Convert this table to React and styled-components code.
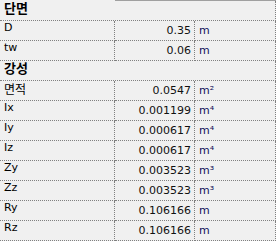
import React from "react";
import styled, { createGlobalStyle } from "styled-components";

const GlobalStyle = createGlobalStyle`
  html, body {
    margin: 0;
    padding: 0;
    background: #f0f0f0;
  }
`;

const Grid = styled.div`
  width: 276px;
  display: grid;
  grid-template-columns: 115px 80px 81px;
  background: #f0f0f0;
  font-family: "DejaVu Sans", "Noto Sans CJK KR", sans-serif;
`;

const TopEdge = styled.div`
  grid-column: 1 / span 3;
  height: 1px;
  background: linear-gradient(to right, #f0f0f0 0 115px, #a0a0a0 115px);
`;

const Heading = styled.div`
  grid-column: 1 / span 3;
  height: 19px;
  border-bottom: 1px dotted #808080;
  border-right: 1px dotted #808080;
  padding-left: 4px;
  font-family: "Noto Sans CJK KR", sans-serif;
  font-weight: 700;
  font-size: 13px;
  line-height: 13px;
  color: #000;
`;

const Cell = styled.div`
  height: 19px;
  border-bottom: 1px dotted #808080;
  border-right: 1px dotted #808080;
  white-space: nowrap;
  overflow: hidden;
`;

const Label = styled(Cell)`
  padding-left: 4px;
  width: 110px;
  font-size: ${(p) => (p.$korean ? "12px" : "11px")};
  line-height: ${(p) => (p.$korean ? "15px" : "14px")};
  color: #000;
  font-family: ${(p) =>
    p.$korean ? '"Noto Sans CJK KR", sans-serif' : '"DejaVu Sans", sans-serif'};
`;

const Value = styled(Cell)`
  width: 76px;
  padding-right: 3px;
  text-align: right;
  font-family: "DejaVu Sans", sans-serif;
  font-size: 11px;
  line-height: 19px;
  color: #101010;
`;

const Unit = styled(Cell)`
  width: 76px;
  padding-left: 4px;
  font-family: "DejaVu Sans", sans-serif;
  font-size: 11px;
  line-height: 19px;
  color: #10105a;
`;

const sections = [
  {
    title: "단면",
    rows: [
      ["D", "0.35", "m"],
      ["tw", "0.06", "m"],
    ],
  },
  {
    title: "강성",
    rows: [
      ["면적", "0.0547", "m²", true],
      ["Ix", "0.001199", "m⁴"],
      ["Iy", "0.000617", "m⁴"],
      ["Iz", "0.000617", "m⁴"],
      ["Zy", "0.003523", "m³"],
      ["Zz", "0.003523", "m³"],
      ["Ry", "0.106166", "m"],
      ["Rz", "0.106166", "m"],
    ],
  },
];

export default function App() {
  return (
    <>
      <GlobalStyle />
      <Grid>
        <TopEdge />
        {sections.map((s) => (
          <React.Fragment key={s.title}>
            <Heading>{s.title}</Heading>
            {s.rows.map(([name, value, unit, korean]) => (
              <React.Fragment key={name}>
                <Label $korean={korean}>{name}</Label>
                <Value>{value}</Value>
                <Unit>{unit}</Unit>
              </React.Fragment>
            ))}
          </React.Fragment>
        ))}
      </Grid>
    </>
  );
}
